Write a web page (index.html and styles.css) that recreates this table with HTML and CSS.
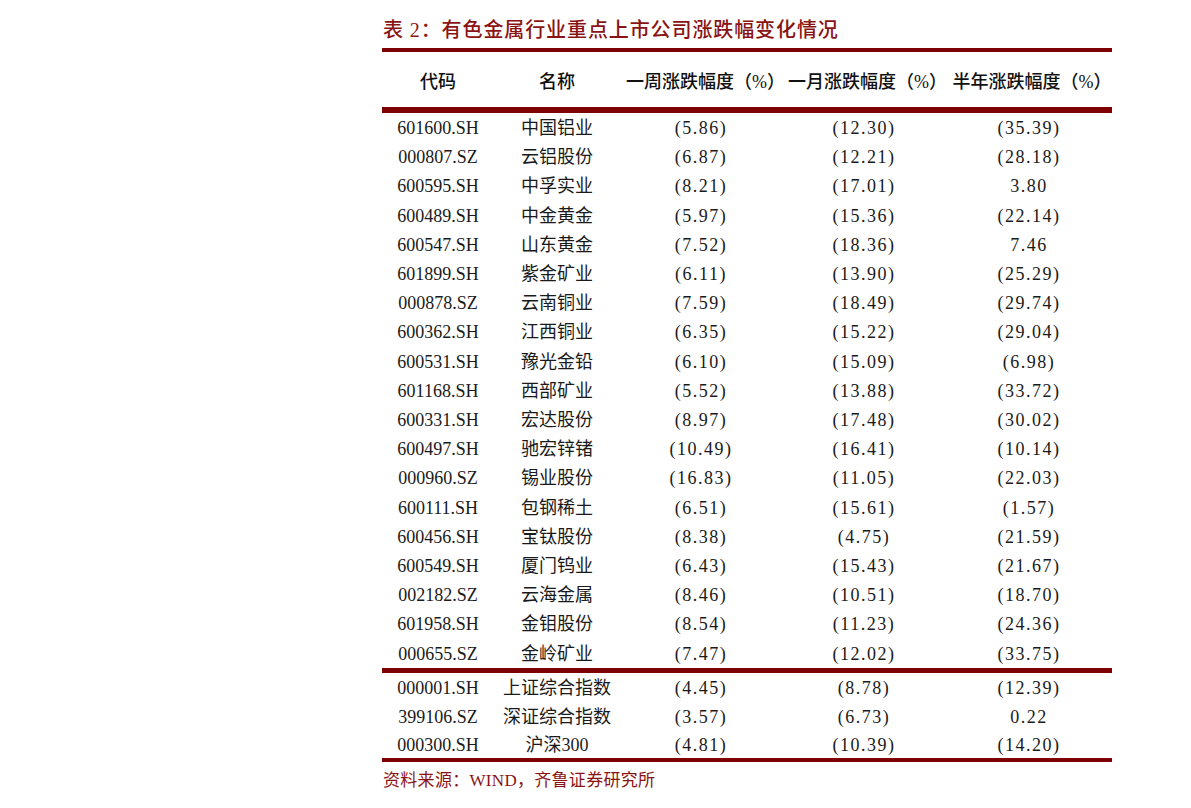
FILE: index.html
```html
<!DOCTYPE html>
<html lang="zh-CN">
<head>
<meta charset="utf-8">
<title>表 2：有色金属行业重点上市公司涨跌幅变化情况</title>
<link rel="stylesheet" href="styles.css">
</head>
<body>
<div class="page">
  <h1 class="title">表 2：有色金属行业重点上市公司涨跌幅变化情况</h1>
  <table class="data">
    <colgroup>
      <col class="c1"><col class="c2"><col class="c3"><col class="c4"><col class="c5">
    </colgroup>
    <thead>
      <tr><th>代码</th><th>名称</th><th class="pct">一周涨跌幅度（%）</th><th class="pct">一月涨跌幅度（%）</th><th class="pct">半年涨跌幅度（%）</th></tr>
    </thead>
    <tbody class="stocks">
      <tr><td class="code">601600.SH</td><td>中国铝业</td><td class="num">(5.86)</td><td class="num">(12.30)</td><td class="num">(35.39)</td></tr>
      <tr><td class="code">000807.SZ</td><td>云铝股份</td><td class="num">(6.87)</td><td class="num">(12.21)</td><td class="num">(28.18)</td></tr>
      <tr><td class="code">600595.SH</td><td>中孚实业</td><td class="num">(8.21)</td><td class="num">(17.01)</td><td class="num">3.80</td></tr>
      <tr><td class="code">600489.SH</td><td>中金黄金</td><td class="num">(5.97)</td><td class="num">(15.36)</td><td class="num">(22.14)</td></tr>
      <tr><td class="code">600547.SH</td><td>山东黄金</td><td class="num">(7.52)</td><td class="num">(18.36)</td><td class="num">7.46</td></tr>
      <tr><td class="code">601899.SH</td><td>紫金矿业</td><td class="num">(6.11)</td><td class="num">(13.90)</td><td class="num">(25.29)</td></tr>
      <tr><td class="code">000878.SZ</td><td>云南铜业</td><td class="num">(7.59)</td><td class="num">(18.49)</td><td class="num">(29.74)</td></tr>
      <tr><td class="code">600362.SH</td><td>江西铜业</td><td class="num">(6.35)</td><td class="num">(15.22)</td><td class="num">(29.04)</td></tr>
      <tr><td class="code">600531.SH</td><td>豫光金铅</td><td class="num">(6.10)</td><td class="num">(15.09)</td><td class="num">(6.98)</td></tr>
      <tr><td class="code">601168.SH</td><td>西部矿业</td><td class="num">(5.52)</td><td class="num">(13.88)</td><td class="num">(33.72)</td></tr>
      <tr><td class="code">600331.SH</td><td>宏达股份</td><td class="num">(8.97)</td><td class="num">(17.48)</td><td class="num">(30.02)</td></tr>
      <tr><td class="code">600497.SH</td><td>驰宏锌锗</td><td class="num">(10.49)</td><td class="num">(16.41)</td><td class="num">(10.14)</td></tr>
      <tr><td class="code">000960.SZ</td><td>锡业股份</td><td class="num">(16.83)</td><td class="num">(11.05)</td><td class="num">(22.03)</td></tr>
      <tr><td class="code">600111.SH</td><td>包钢稀土</td><td class="num">(6.51)</td><td class="num">(15.61)</td><td class="num">(1.57)</td></tr>
      <tr><td class="code">600456.SH</td><td>宝钛股份</td><td class="num">(8.38)</td><td class="num">(4.75)</td><td class="num">(21.59)</td></tr>
      <tr><td class="code">600549.SH</td><td>厦门钨业</td><td class="num">(6.43)</td><td class="num">(15.43)</td><td class="num">(21.67)</td></tr>
      <tr><td class="code">002182.SZ</td><td>云海金属</td><td class="num">(8.46)</td><td class="num">(10.51)</td><td class="num">(18.70)</td></tr>
      <tr><td class="code">601958.SH</td><td>金钼股份</td><td class="num">(8.54)</td><td class="num">(11.23)</td><td class="num">(24.36)</td></tr>
      <tr><td class="code">000655.SZ</td><td>金岭矿业</td><td class="num">(7.47)</td><td class="num">(12.02)</td><td class="num">(33.75)</td></tr>
    </tbody>
    <tbody class="indices">
      <tr><td class="code">000001.SH</td><td>上证综合指数</td><td class="num">(4.45)</td><td class="num">(8.78)</td><td class="num">(12.39)</td></tr>
      <tr><td class="code">399106.SZ</td><td>深证综合指数</td><td class="num">(3.57)</td><td class="num">(6.73)</td><td class="num">0.22</td></tr>
      <tr><td class="code">000300.SH</td><td>沪深300</td><td class="num">(4.81)</td><td class="num">(10.39)</td><td class="num">(14.20)</td></tr>
    </tbody>
  </table>
  <p class="source">资料来源：WIND，齐鲁证券研究所</p>
</div>
</body>
</html>
```

FILE: styles.css
```css
html, body {
  margin: 0;
  padding: 0;
  background: #ffffff;
}

.page {
  margin-left: 382px;
  width: 730px;
  padding-top: 16px;
  font-family: "Liberation Serif", "Noto Sans CJK SC", serif;
  color: #1a1a1a;
}

.title {
  margin: 0 0 4px 1px;
  font-family: "Liberation Serif", "Noto Sans CJK SC", serif;
  font-size: 20px;
  line-height: 28px;
  font-weight: 500;
  color: #8a1414;
  letter-spacing: 0.9px;
}

.data {
  width: 730px;
  border-collapse: collapse;
  table-layout: fixed;
  font-size: 18px;
}

.c1 { width: 112px; }
.c2 { width: 126px; }
.c3 { width: 162px; }
.c4 { width: 164px; }
.c5 { width: 166px; }

.data thead tr {
  border-top: 4px solid #7f0000;
  border-bottom: 6px solid #7f0000;
}

.data th {
  height: 55px;
  padding: 0;
  font-weight: 500;
  font-size: 18px;
  text-align: center;
  vertical-align: middle;
  color: #111;
}

.data th.pct {
  padding-left: 6px;
}

.data td {
  text-align: center;
  vertical-align: middle;
  white-space: nowrap;
}

.stocks td {
  padding: 2px 0 0 0;
  line-height: 27.2px;
}

.indices td {
  padding: 2.4px 0 0 0;
  line-height: 26.1px;
}

.data .code {
  letter-spacing: 0;
}

.data .num {
  letter-spacing: 1.5px;
}

.stocks tr:last-child {
  border-bottom: 5px solid #7f0000;
}

.indices tr:last-child {
  border-bottom: 4px solid #7f0000;
}

.source {
  margin: 7px 0 0 1px;
  font-size: 17px;
  line-height: 24px;
  color: #8a1414;
  letter-spacing: 0.3px;
}
```
